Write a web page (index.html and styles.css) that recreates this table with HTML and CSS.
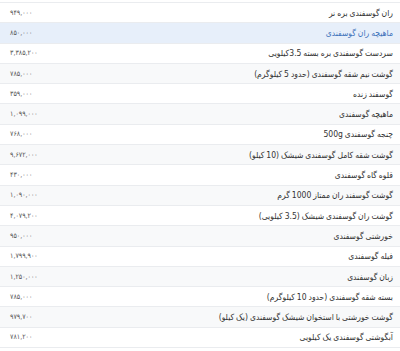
FILE: index.html
```html
<!DOCTYPE html>
<html lang="fa">
<head>
<meta charset="utf-8">
<link rel="stylesheet" href="styles.css">
</head>
<body>
<table class="prices">
<tbody>
<tr><td class="price">۹۴۹,۰۰۰</td><td class="name">ران گوسفندی بره نر</td></tr>
<tr class="active"><td class="price">۸۵۰,۰۰۰</td><td class="name">ماهیچه ران گوسفندی</td></tr>
<tr><td class="price">۳,۳۸۵,۲۰۰</td><td class="name">سردست گوسفندی بره بسته 3.5کیلویی</td></tr>
<tr><td class="price">۷۸۵,۰۰۰</td><td class="name">گوشت نیم شقه گوسفندی (حدود 5 کیلوگرم)</td></tr>
<tr><td class="price">۳۵۹,۰۰۰</td><td class="name">گوسفند زنده</td></tr>
<tr><td class="price">۱,۰۹۹,۰۰۰</td><td class="name">ماهیچه گوسفندی</td></tr>
<tr><td class="price">۷۶۸,۰۰۰</td><td class="name">چنجه گوسفندی 500g</td></tr>
<tr><td class="price">۹,۶۷۲,۰۰۰</td><td class="name">گوشت شقه کامل گوسفندی شیشک (10 کیلو)</td></tr>
<tr><td class="price">۴۳۰,۰۰۰</td><td class="name">قلوه گاه گوسفندی</td></tr>
<tr><td class="price">۱,۰۹۰,۰۰۰</td><td class="name">گوشت گوسفند ران ممتاز 1000 گرم</td></tr>
<tr><td class="price">۴,۰۷۹,۲۰۰</td><td class="name">گوشت ران گوسفندی شیشک (3.5 کیلویی)</td></tr>
<tr><td class="price">۹۵۰,۰۰۰</td><td class="name">خورشتی گوسفندی</td></tr>
<tr><td class="price">۱,۷۹۹,۹۰۰</td><td class="name">فیله گوسفندی</td></tr>
<tr><td class="price">۱,۲۵۰,۰۰۰</td><td class="name">زبان گوسفندی</td></tr>
<tr><td class="price">۷۸۵,۰۰۰</td><td class="name">بسته شقه گوسفندی (حدود 10 کیلوگرم)</td></tr>
<tr><td class="price">۹۷۹,۷۰۰</td><td class="name">گوشت خورشتی با استخوان شیشک گوسفندی (یک کیلو)</td></tr>
<tr><td class="price">۷۸۱,۲۰۰</td><td class="name">آبگوشتی گوسفندی یک کیلویی</td></tr>
</tbody>
</table>
</body>
</html>
```

FILE: styles.css
```css
html, body {
  margin: 0;
  padding: 0;
  background: #ffffff;
}
body {
  font-family: "DejaVu Sans Condensed", "DejaVu Sans", sans-serif;
  font-stretch: condensed;
  color: #333;
  padding-top: 2px;
}
.prices {
  width: 100%;
  border-collapse: collapse;
  table-layout: fixed;
}
.prices tr {
  border-top: 1px solid #eaecef;
  border-bottom: 1px solid #eaecef;
}
.prices tr:nth-child(even) {
  background: #f8f9fa;
}
.prices tr.active {
  background: #e7effa;
}
.prices td {
  height: 19.3px;
  line-height: 12px;
  vertical-align: middle;
  white-space: nowrap;
}
.prices td.name {
  direction: rtl;
  text-align: right;
  font-size: 8.5px;
  word-spacing: -0.5px;
  padding: 0 7px 0 0;
}
.prices td.price {
  width: 40%;
  direction: ltr;
  text-align: left;
  font-size: 7px;
  color: #555;
  padding: 0 0 0 10px;
}
.active .name {
  color: #3f73ba;
}
```
